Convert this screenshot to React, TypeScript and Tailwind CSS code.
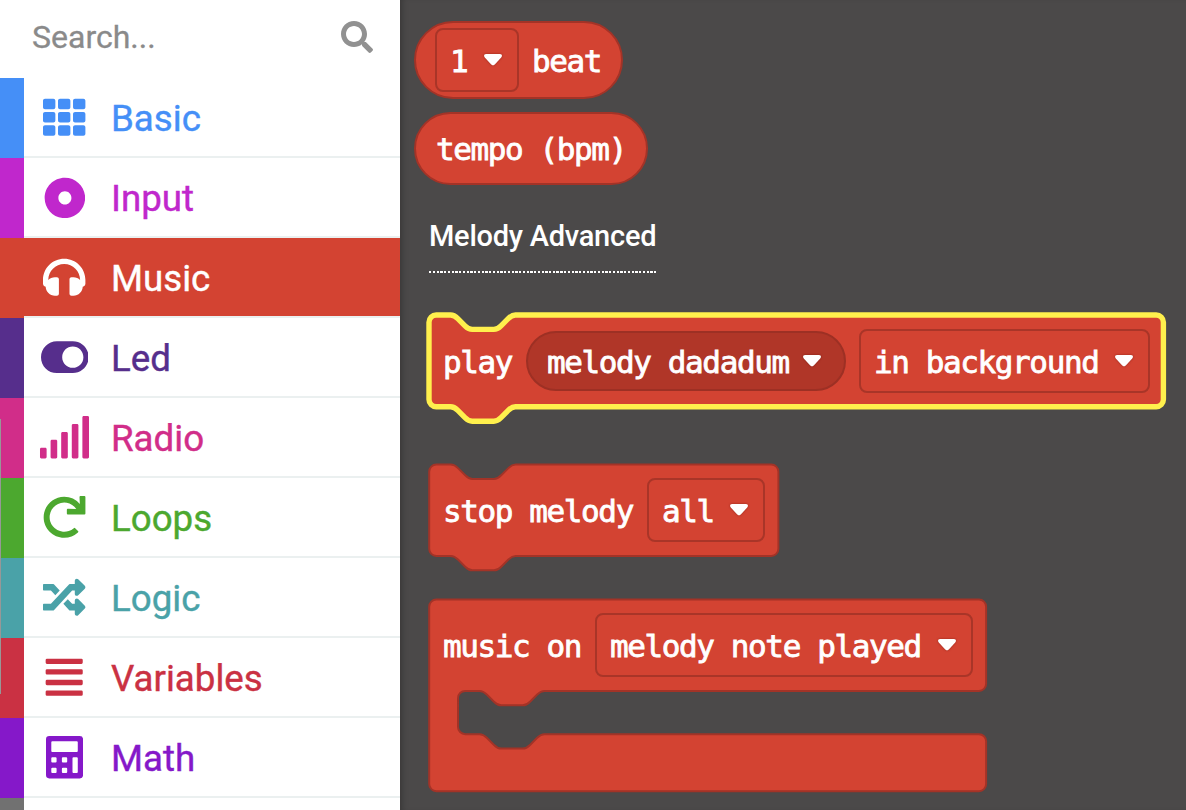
import React from "react";
import {
  FaSearch,
  FaTh,
  FaDotCircle,
  FaHeadphones,
  FaToggleOn,
  FaSignal,
  FaRedo,
  FaRandom,
  FaAlignJustify,
} from "react-icons/fa";

function CalculatorIcon() {
  return (
    <svg viewBox="0 0 448 512" height="42.4" fill="currentColor" fillRule="evenodd">
      <path d="M40 0h368a40 40 0 0 1 40 40v432a40 40 0 0 1-40 40H40a40 40 0 0 1-40-40V40A40 40 0 0 1 40 0zM76 64a12 12 0 0 0-12 12v104a12 12 0 0 0 12 12h296a12 12 0 0 0 12-12V76a12 12 0 0 0-12-12zM76 256a12 12 0 0 0-12 12v40a12 12 0 0 0 12 12h40a12 12 0 0 0 12-12v-40a12 12 0 0 0-12-12zM204 256a12 12 0 0 0-12 12v40a12 12 0 0 0 12 12h40a12 12 0 0 0 12-12v-40a12 12 0 0 0-12-12zM76 384a12 12 0 0 0-12 12v40a12 12 0 0 0 12 12h40a12 12 0 0 0 12-12v-40a12 12 0 0 0-12-12zM204 384a12 12 0 0 0-12 12v40a12 12 0 0 0 12 12h40a12 12 0 0 0 12-12v-40a12 12 0 0 0-12-12zM332 256a12 12 0 0 0-12 12v168a12 12 0 0 0 12 12h40a12 12 0 0 0 12-12V268a12 12 0 0 0-12-12z" />
    </svg>
  );
}

const categories = [
  { name: "Basic", bar: "bg-[#458ff7]", text: "text-[#458ff7]", row: "", icon: <FaTh size={42.4} /> },
  { name: "Input", bar: "bg-[#c027cc]", text: "text-[#c027cc]", row: "", icon: <FaDotCircle size={41.8} /> },
  { name: "Music", bar: "bg-[#d34332]", text: "text-white", row: "bg-[#d34332]", icon: <FaHeadphones size={42.4} /> },
  { name: "Led", bar: "bg-[#562e8c]", text: "text-[#562e8c]", row: "", icon: <FaToggleOn className="h-[42.4px] w-[47.7px]" /> },
  { name: "Radio", bar: "bg-[#d12d89]", text: "text-[#d12d89]", row: "", icon: <FaSignal className="h-[42.4px] w-[53px]" /> },
  { name: "Loops", bar: "bg-[#4ca82f]", text: "text-[#4ca82f]", row: "", icon: <FaRedo size={42.4} /> },
  { name: "Logic", bar: "bg-[#4aa2a8]", text: "text-[#4aa2a8]", row: "", icon: <FaRandom size={42.4} /> },
  { name: "Variables", bar: "bg-[#ca3143]", text: "text-[#ca3143]", row: "", icon: <FaAlignJustify size={42.4} /> },
  { name: "Math", bar: "bg-[#8518c9]", text: "text-[#8518c9]", row: "", icon: <CalculatorIcon /> },
];

function Caret() {
  return (
    <svg
      width="20"
      height="14"
      viewBox="0 0 20 14"
      className="shrink-0 drop-shadow-[0_0_1px_rgba(90,10,0,0.5)]"
    >
      <path
        d="M3 1H17Q19 1 19 2.6Q19 3.6 18.2 4.5L11.8 11.6Q10 13.2 8.2 11.6L1.8 4.5Q1 3.6 1 2.6Q1 1 3 1Z"
        fill="white"
      />
    </svg>
  );
}

function Label({ children, className = "" }: { children: React.ReactNode; className?: string }) {
  return <span className={`shrink-0 pt-px whitespace-pre ${className}`}>{children}</span>;
}

/* Square drop-down field with its caret at the right edge. */
function Field({ text, className }: { text: string; className: string }) {
  return (
    <div
      className={`flex h-[64px] shrink-0 items-center justify-between rounded-[8px] border-2 border-[#a93528] pr-[14px] pl-[13px] ${className}`}
    >
      <Label>{text}</Label>
      <Caret />
    </div>
  );
}

const NOTCH_R = "c2,0 3,1 4,2l4,4c1,1 2,2 4,2h12c2,0 3,-1 4,-2l4,-4c1,-1 2,-2 4,-2";
const NOTCH_L = "c-2,0 -3,1 -4,2l-4,4c-1,1 -2,2 -4,2h-12c-2,0 -3,-1 -4,-2l-4,-4c-1,-1 -2,-2 -4,-2";

function statementPath(w: number, h: number) {
  return `M0,4A4,4 0 0,1 4,0H12${NOTCH_R}H${w - 4}a4,4 0 0,1 4,4V${h - 4}a4,4 0 0,1 -4,4H48${NOTCH_L}H4a4,4 0 0,1 -4,-4Z`;
}

function loopPath(w: number) {
  return `M0,4A4,4 0 0,1 4,0H${w - 4}a4,4 0 0,1 4,4V46.8a4,4 0 0,1 -4,4H64${NOTCH_L}H20a4,4 0 0,0 -4,4V70.8a4,4 0 0,0 4,4H28${NOTCH_R}H${w - 4}a4,4 0 0,1 4,4V102.5a4,4 0 0,1 -4,4H4a4,4 0 0,1 -4,-4Z`;
}

function Shape({ d, selected = false }: { d: string; selected?: boolean }) {
  return (
    <svg className="absolute top-0 left-0 h-full w-full overflow-visible">
      <path
        d={d}
        transform={selected ? "scale(1.8)" : "translate(0.2 0.5) scale(1.8)"}
        fill="#d34332"
        stroke={selected ? "#fff04d" : "#a33327"}
        strokeWidth={selected ? 3 : 1.1}
      />
    </svg>
  );
}

export default function App() {
  return (
    <div className="flex h-[810px] w-[1186px] overflow-hidden bg-[#4b4949] font-[Roboto,sans-serif]">
      <aside className="relative flex h-full w-[400px] shrink-0 flex-col bg-white">
        <div className="flex h-[78px] shrink-0 items-center justify-between pr-[27px] pb-[4px] pl-[32px] text-[#8a8a8a]">
          <span className="text-[32px] leading-[40px] [-webkit-text-stroke:0.3px_#8a8a8a]">Search...</span>
          <FaSearch size={32} color="#919191" />
        </div>
        {categories.map((c) => (
          <div key={c.name} className="flex h-[80px] shrink-0">
            <div className={`w-[24px] shrink-0 ${c.bar}`} />
            <div
              className={`flex flex-1 items-center border-b-2 border-[#ebf0f0] bg-clip-padding ${c.row} ${c.text}`}
            >
              <div className="flex w-[80px] shrink-0 justify-center pt-px pl-[1px]">{c.icon}</div>
              <span className="pt-[4px] pl-[7px] text-[36.7px] leading-[44px] [-webkit-text-stroke:0.4px_currentColor]">
                {c.name}
              </span>
            </div>
          </div>
        ))}
        <div className="h-[12px] w-[24px] shrink-0 bg-[#717171]" />
        <div className="absolute top-[419px] left-0 h-[275px] w-px bg-[#979797]" />
      </aside>

      <main className="flex min-w-0 flex-1 flex-col items-start pt-[21px] font-['DejaVu_Sans_Mono',monospace] text-[31px] leading-[40px] tracking-[-1.4px] text-white shadow-[inset_6px_0_6px_-4px_rgba(0,0,0,0.25)] [-webkit-text-stroke:0.8px_white]">
        <div className="ml-[14px] flex h-[78px] w-[209px] items-center rounded-full border-2 border-[#a33327] bg-[#d34332] pl-[19px]">
          <Field text="1" className="w-[84px]" />
          <Label className="pl-[13px]">beat</Label>
        </div>

        <div className="mt-[13px] ml-[14px] flex h-[73px] w-[234px] items-center rounded-full border-2 border-[#a33327] bg-[#d34332] pl-[20px]">
          <Label>tempo (bpm)</Label>
        </div>

        <div className="mt-[31px] ml-[29px] h-[57px] w-[228px] bg-[repeating-linear-gradient(90deg,white_0_2.4px,transparent_2.4px_3.75px)] bg-[length:100%_2px] bg-bottom bg-no-repeat">
          <span className="block font-[Roboto,sans-serif] text-[29px] leading-[40px] font-medium tracking-[-0.25px] whitespace-nowrap [-webkit-text-stroke:0]">
            Melody Advanced
          </span>
        </div>

        <div className="relative mt-[42px] ml-[29px] flex h-[92px] w-[734.5px] shrink-0 items-center pl-[14px]">
          <Shape d={statementPath(408, 51)} selected />
          <div className="relative flex items-center">
            <Label className="w-[83px]">play</Label>
            <div className="flex h-[60px] w-[320px] shrink-0 items-center justify-between rounded-full border-2 border-[#9d3024] bg-[#b03628] pr-[22px] pl-[19px]">
              <Label>melody dadadum</Label>
              <Caret />
            </div>
            <Field text="in background" className="ml-[13px] w-[291px]" />
          </div>
        </div>

        <div className="relative mt-[57px] ml-[29px] flex h-[92px] w-[349px] shrink-0 items-center pl-[14px]">
          <Shape d={statementPath(194, 50.8)} />
          <div className="relative flex items-center">
            <Label className="w-[204px]">stop melody</Label>
            <Field text="all" className="w-[118px]" />
          </div>
        </div>

        <div className="relative mt-[43px] ml-[29px] flex h-[192px] w-[557px] shrink-0 items-start pt-[14px] pl-[14px]">
          <Shape d={loopPath(309.4)} />
          <div className="relative flex items-center">
            <Label className="w-[152px]">music on</Label>
            <Field text="melody note played" className="w-[378px]" />
          </div>
        </div>
      </main>
    </div>
  );
}
